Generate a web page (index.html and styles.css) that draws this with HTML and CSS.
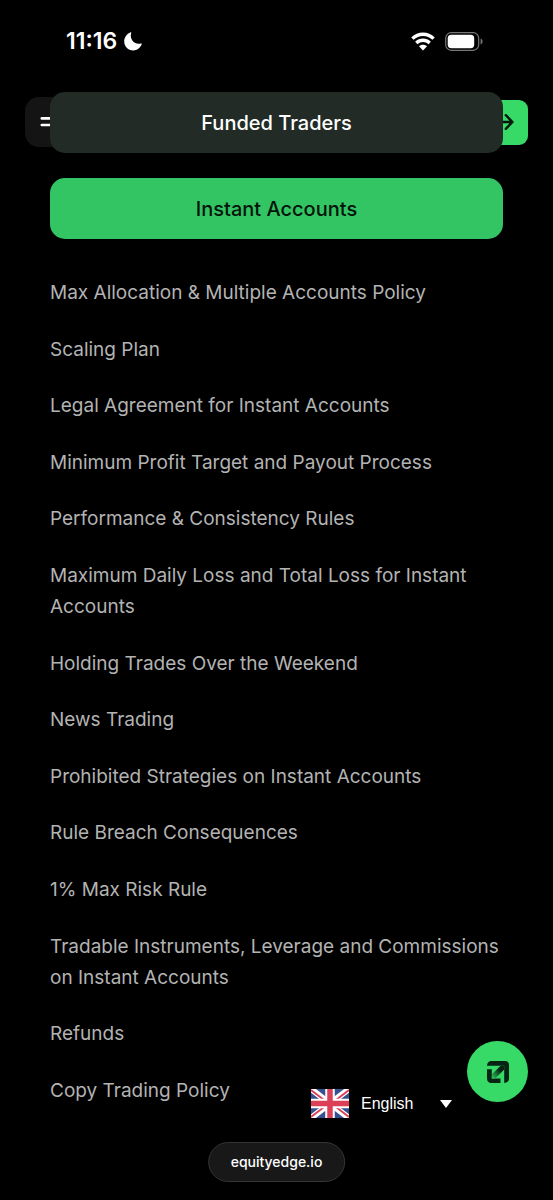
FILE: index.html
```html
<!DOCTYPE html>
<html lang="en">
<head>
<meta charset="utf-8">
<meta name="viewport" content="width=device-width, initial-scale=1">
<title>Funded Traders</title>
<link rel="stylesheet" href="styles.css">
</head>
<body>
<div class="page">
  <header class="status">
    <div class="status-group status-time">
      <span>11:16</span>
      <svg width="18" height="19" viewBox="0 0 18 19" aria-hidden="true"><path fill="#fff" d="M6.600.3C7.200 0 7.500.4 7.200 1 5.300 6.500 9.800 13 16.800 11.500 17.600 11.300 18 11.700 17.700 12.300 16.300 16 13 18.500 9.200 18.500 4 18.500.2 14.700.2 9.600.2 5.500 2.800 1.900 6.600.3Z"/></svg>
    </div>
    <div class="status-group status-icons">
      <svg width="24" height="19" viewBox="0 0 24 19" aria-hidden="true"><g fill="none" stroke="#fff" stroke-width="3.400"><path d="M1.400 6.600C7.400.8 16.600.8 22.600 6.600"/><path d="M5.300 10.900c3.800-3.600 9.600-3.600 13.400 0"/></g><path fill="#fff" d="M8 14.300c2.300-2 5.700-2 8 0L12 18.500Z"/></svg>
      <svg width="38" height="19" viewBox="0 0 38 19" aria-hidden="true"><rect x=".7" y=".7" width="33" height="17.600" rx="5.500" fill="none" stroke="#777" stroke-width="1.200"/><rect x="2.700" y="2.800" width="26.500" height="13.400" rx="3.600" fill="#fff"/><path fill="#777" d="M35.600 6.500c2.600.8 2.600 5.200 0 6Z"/></svg>
    </div>
  </header>

  <nav class="topbar" aria-label="Site">
    <button class="menu" type="button" aria-label="Menu"><svg width="20" height="12" viewBox="0 0 20 12" aria-hidden="true"><path d="M1.800 2.400H19M1.800 9H19" stroke="#fff" stroke-width="2.600" stroke-linecap="round"/></svg></button>
    <a class="go" href="#start" aria-label="Get started"><svg width="20" height="18" viewBox="0 0 20 18" aria-hidden="true"><path d="M1 9h16M10.800 2.200 17.500 9l-6.700 6.800" fill="none" stroke="#04170a" stroke-width="2.400" stroke-linecap="round" stroke-linejoin="round"/></svg></a>
  </nav>

  <main class="content">
    <div class="tabs">
      <button class="tab" type="button">Funded Traders</button>
      <button class="tab tab-active" type="button">Instant Accounts</button>
    </div>
    <ul class="topics">
      <li><a href="#allocation">Max Allocation &amp; Multiple Accounts Policy</a></li>
      <li><a href="#scaling">Scaling Plan</a></li>
      <li><a href="#legal">Legal Agreement for Instant Accounts</a></li>
      <li><a href="#payout">Minimum Profit Target and Payout Process</a></li>
      <li><a href="#performance">Performance &amp; Consistency Rules</a></li>
      <li><a href="#loss">Maximum Daily Loss and Total Loss for Instant Accounts</a></li>
      <li><a href="#weekend">Holding Trades Over the Weekend</a></li>
      <li><a href="#news">News Trading</a></li>
      <li><a href="#prohibited">Prohibited Strategies on Instant Accounts</a></li>
      <li><a href="#breach">Rule Breach Consequences</a></li>
      <li><a href="#risk">1% Max Risk Rule</a></li>
      <li><a href="#instruments">Tradable Instruments, Leverage and Commissions on Instant Accounts</a></li>
      <li><a href="#refunds">Refunds</a></li>
      <li><a href="#copy">Copy Trading Policy</a></li>
    </ul>
  </main>

  <div class="language">
    <svg width="38" height="29" viewBox="0 0 38 29" aria-hidden="true"><rect width="38" height="29" fill="#34508f"/><path d="M0 0 38 29M38 0 0 29" stroke="#fff" stroke-width="6"/><path d="M0 1 17 14M21 15 38 28M38 1 21 14M17 15 0 28" stroke="#dc4058" stroke-width="1.800"/><path d="M19 0V29M0 14.500H38" stroke="#fff" stroke-width="9.500"/><path d="M19 0V29M0 14.500H38" stroke="#dc4058" stroke-width="5.500"/></svg>
    <select class="language-select" aria-label="Language"><option>English</option></select>
    <svg class="caret" width="12" height="8" viewBox="0 0 12 8" aria-hidden="true"><path fill="#fff" d="M0 0h12L6 8Z"/></svg>
  </div>

  <button class="chat" type="button" aria-label="Open chat">
    <svg width="22" height="22" viewBox="0 0 22 22" aria-hidden="true">
      <defs><linearGradient id="shaft" x1="15" y1="7" x2="5" y2="17" gradientUnits="userSpaceOnUse"><stop offset=".2" stop-color="#062413"/><stop offset="1" stop-color="#30c25c"/></linearGradient></defs>
      <path fill="#062413" d="M0 4.800C0 1.700 2 0 4.500 0H18c2.500 0 4 1.500 4 4v13.500c0 2.500-1.500 4.200-4.800 4.500V4.800Z"/>
      <path fill="#062413" d="M0 8.300h4.800v9.200h8.700V22H4.500C1.700 22 0 20.300 0 17.500Z"/>
      <path fill="url(#shaft)" d="M13.600 4.800h3.600v3.800L8.300 17.500H4.800v-3.900Z"/>
    </svg>
  </button>

  <a class="address" href="#top">equityedge.io</a>
</div>
</body>
</html>
```
FILE: styles.css
```css
* { box-sizing: border-box; }

body {
  margin: 0;
  background: #000;
  color: #fff;
  font-family: Inter, "Liberation Sans", sans-serif;
}

button, select { font: inherit; color: inherit; border: 0; padding: 0; }
a { color: inherit; text-decoration: none; }
svg { display: block; flex: none; }

.page {
  position: relative;
  display: flex;
  flex-direction: column;
  min-height: 100vh;
}

.status {
  display: flex;
  justify-content: space-between;
  align-items: center;
  height: 82px;
  padding: 0 70px 0 66px;
}
.status-group { display: flex; align-items: center; }
.status-time { gap: 7px; font-size: 23px; font-weight: 600; }
.status-icons { gap: 10px; }

.topbar {
  position: absolute;
  top: 97px;
  left: 25px;
  right: 25px;
  display: flex;
  justify-content: space-between;
  align-items: center;
}
.menu {
  display: flex;
  align-items: center;
  width: 50px;
  height: 50px;
  padding-left: 15px;
  border-radius: 14px;
  background: #141414;
}
.go {
  display: flex;
  align-items: center;
  justify-content: flex-end;
  width: 150px;
  height: 45px;
  padding-right: 13px;
  border-radius: 9px;
  background: #37d967;
}

.content {
  position: relative;
  flex: 1;
  display: flex;
  flex-direction: column;
  gap: 38px;
  padding: 10px 50px 94px;
}
.tabs { display: flex; flex-direction: column; gap: 25px; }
.tab {
  height: 61px;
  border-radius: 15px;
  background: #222b25;
  font-size: 20px;
  font-weight: 500;
}
.tab-active { background: #33c463; color: #03140a; }

.topics {
  flex: 1;
  display: flex;
  flex-direction: column;
  justify-content: space-between;
  gap: 24px;
  margin: 0;
  padding: 0;
  list-style: none;
  color: #b3b3b3;
  font-size: 19px;
  line-height: 31px;
}

.language {
  position: absolute;
  right: 101px;
  bottom: 82px;
  display: flex;
  align-items: center;
  gap: 12px;
}
.language-select {
  appearance: none;
  width: 91px;
  height: 29px;
  margin-right: -24px;
  background: transparent;
  font: 16px "Liberation Sans", Arial, sans-serif;
}
.caret { pointer-events: none; }

.chat {
  position: absolute;
  right: 25px;
  bottom: 98px;
  display: flex;
  align-items: center;
  justify-content: center;
  width: 61px;
  height: 61px;
  border-radius: 50%;
  background: #37d967;
}

.address {
  position: absolute;
  left: 50%;
  bottom: 18px;
  transform: translateX(-50%);
  padding: 0 22px;
  border: 1px solid #343434;
  border-radius: 20px;
  background: #181818;
  font-size: 14px;
  font-weight: 500;
  line-height: 38px;
}
```
